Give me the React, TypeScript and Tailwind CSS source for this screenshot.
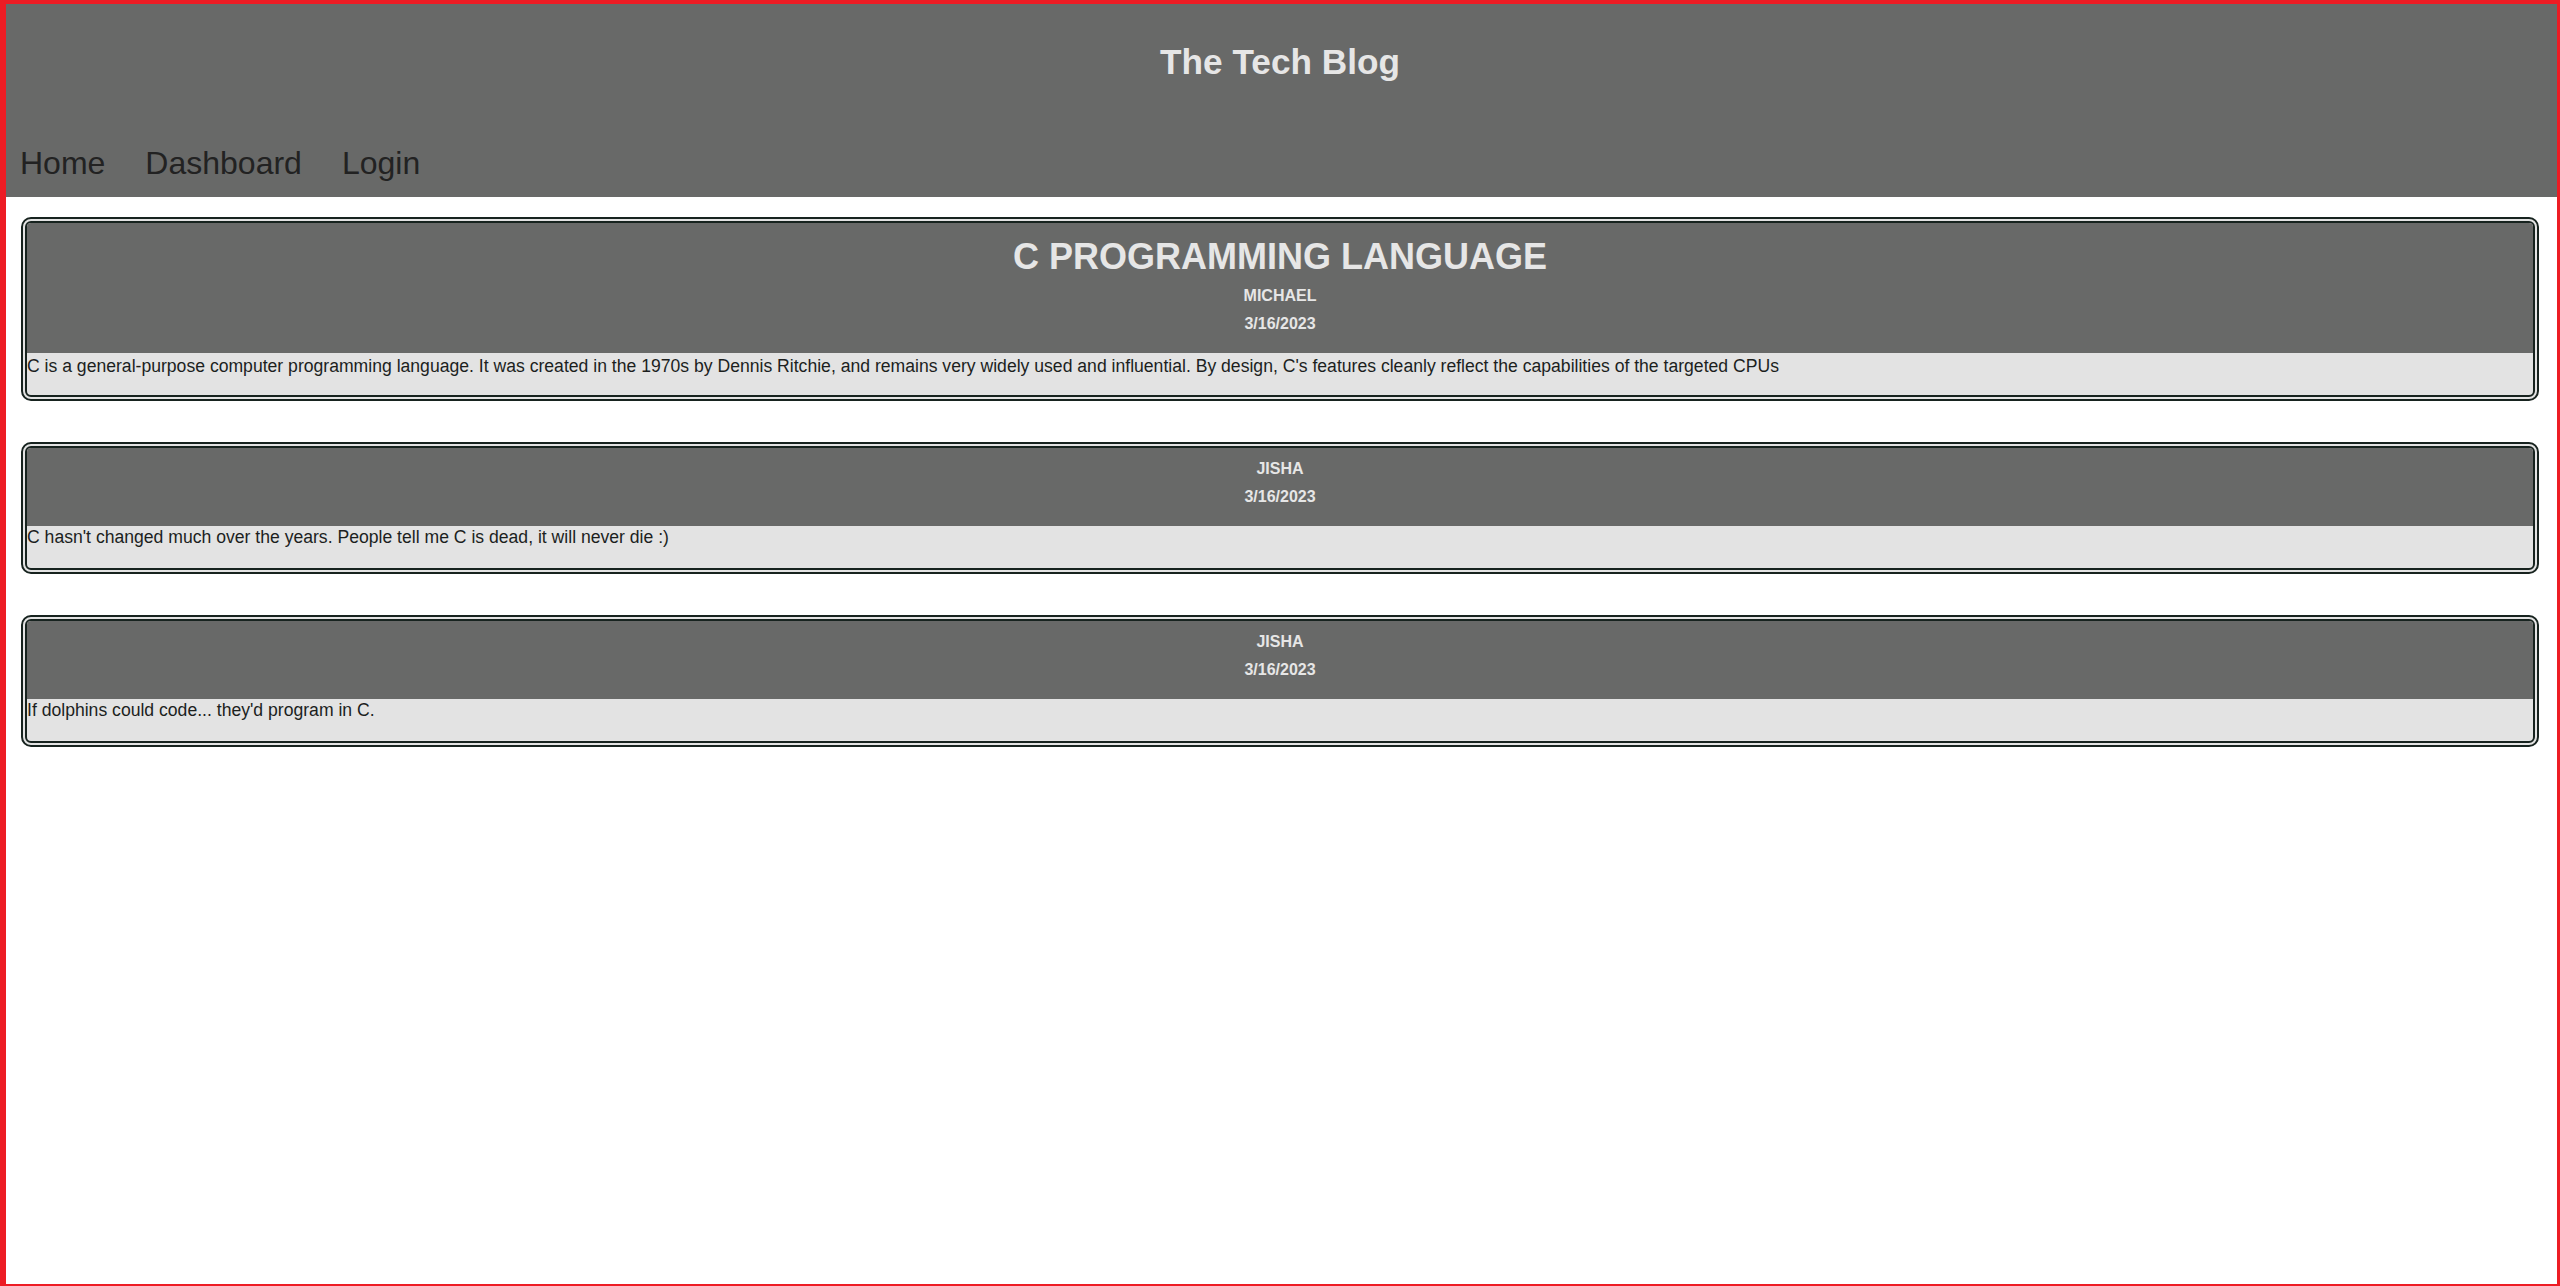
import React from "react";

type Post = { title?: string; author: string; date: string; body: string };

const posts: Post[] = [
  {
    title: "C PROGRAMMING LANGUAGE",
    author: "MICHAEL",
    date: "3/16/2023",
    body: "C is a general-purpose computer programming language. It was created in the 1970s by Dennis Ritchie, and remains very widely used and influential. By design, C's features cleanly reflect the capabilities of the targeted CPUs",
  },
  {
    author: "JISHA",
    date: "3/16/2023",
    body: "C hasn't changed much over the years. People tell me C is dead, it will never die :)",
  },
  {
    author: "JISHA",
    date: "3/16/2023",
    body: "If dolphins could code... they'd program in C.",
  },
];

function Card({ post }: { post: Post }) {
  const hasTitle = !!post.title;
  return (
    <div className="border-[6px] border-double border-[#17231f] bg-[#e3e3e3] rounded-[10px] overflow-hidden">
      <div
        className={`bg-[#686968] text-[#e6e6e6] text-center font-bold ${
          hasTitle ? "pt-[13px] pb-[20px]" : "pt-[12px] pb-[20px]"
        }`}
      >
        {hasTitle && (
          <h2 className="text-[36px] leading-[41px] mb-[10px]">{post.title}</h2>
        )}
        <div className="text-[16px] leading-[18px]">{post.author}</div>
        <div className="text-[16px] leading-[18px] mt-[10px]">{post.date}</div>
      </div>
      <p
        className={`text-[17.6px] leading-[20px] text-[#1c1f1e] ${
          hasTitle ? "pt-[3px] pb-[19px]" : "pt-[1px] pb-[21px]"
        }`}
      >
        {post.body}
      </p>
    </div>
  );
}

export default function App() {
  return (
    <div
      className="relative min-h-[1286px] bg-white"
      style={{ fontFamily: '"Liberation Sans", Arial, sans-serif' }}
    >
      <header className="bg-[#686968] pt-[42px] pb-[15px]">
        <h1 className="text-center text-[35.2px] leading-[40px] font-bold text-[#e6e6e6]">
          The Tech Blog
        </h1>
        <nav className="mt-[63px] pl-[20px] flex gap-10 text-[32px] leading-[37px] text-[#222222]">
          <a href="#">Home</a>
          <a href="#">Dashboard</a>
          <a href="#">Login</a>
        </nav>
      </header>
      <main className="px-[21px] pt-[20px] flex flex-col gap-[41px]">
        {posts.map((p, i) => (
          <Card key={i} post={p} />
        ))}
      </main>
      <div className="pointer-events-none absolute inset-0 border-l-[6px] border-t-4 border-r-[3px] border-b-2 border-[#ed1c24]" />
    </div>
  );
}
